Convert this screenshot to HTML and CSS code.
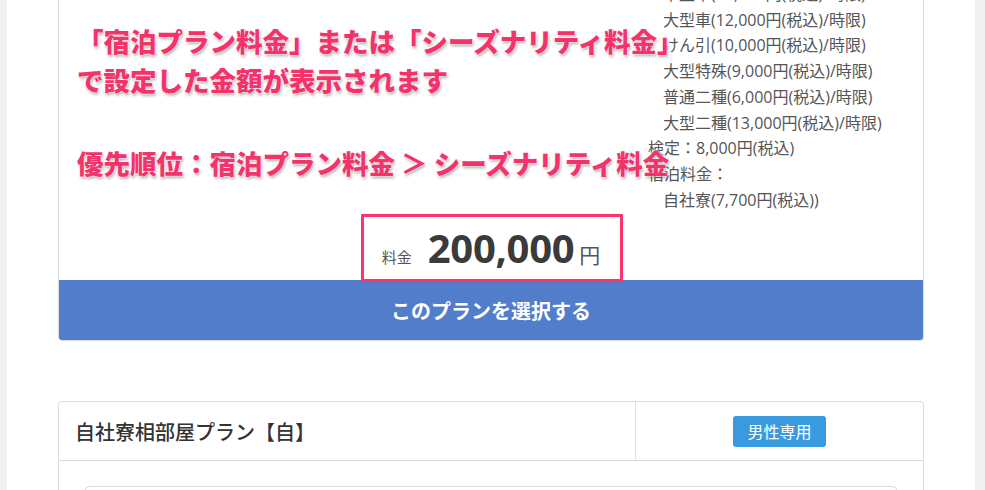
FILE: index.html
```html
<!DOCTYPE html>
<html lang="ja">
<head>
<meta charset="utf-8">
<title>プラン選択</title>
<link rel="stylesheet" href="styles.css">
</head>
<body>
<div class="page">
  <main class="panel">
    <section class="card plan-card">
      <div class="plan-body">
        <div class="plan-main"></div>
        <ul class="fee-list">
          <li class="sub">中型車(10,000円(税込)/時限)</li>
          <li class="sub">大型車(12,000円(税込)/時限)</li>
          <li class="sub">けん引(10,000円(税込)/時限)</li>
          <li class="sub">大型特殊(9,000円(税込)/時限)</li>
          <li class="sub">普通二種(6,000円(税込)/時限)</li>
          <li class="sub">大型二種(13,000円(税込)/時限)</li>
          <li>検定：8,000円(税込)</li>
          <li>宿泊料金：</li>
          <li class="sub">自社寮(7,700円(税込))</li>
        </ul>
      </div>
      <div class="price-row">
        <div class="price-box">
          <span class="price-label">料金</span>
          <span class="price-value">200,000</span>
          <span class="price-unit">円</span>
        </div>
      </div>
      <button class="select-btn" type="button">このプランを選択する</button>
      <div class="annotation">
        <p>「宿泊プラン料金」または「シーズナリティ料金」</p>
        <p>で設定した金額が表示されます</p>
        <p class="gap">優先順位：宿泊プラン料金 ＞ シーズナリティ料金</p>
      </div>
    </section>

    <section class="card plan-card2">
      <div class="plan-head">
        <h2 class="plan-title">自社寮相部屋プラン【自】</h2>
        <div class="plan-tag"><span class="badge">男性専用</span></div>
      </div>
      <div class="plan-body2">
        <div class="inner-box"></div>
      </div>
    </section>
  </main>
</div>
</body>
</html>
```

FILE: styles.css
```css
* { box-sizing: border-box; }

html, body {
  margin: 0;
  height: 100%;
  overflow: hidden;
}

body {
  background: #f1f1f1;
  font-family: "Open Sans", "Noto Sans CJK JP", sans-serif;
  color: #555;
}

.page {
  padding: 0 10px 0 7px;
  height: 100%;
}

.panel {
  display: flow-root;
  background: #fff;
  height: 100%;
  padding: 0 51px;
}

.card {
  border: 1px solid #dcdcdc;
  border-radius: 4px;
  background: #fff;
}

.plan-card {
  position: relative;
  margin-top: -19px;
}

.plan-body {
  display: grid;
  grid-template-columns: 589px 1fr;
}

.fee-list {
  list-style: none;
  margin: 0;
  padding: 0;
  font-size: 16px;
  line-height: 25.7px;
  color: #555;
  white-space: nowrap;
}

.fee-list .sub {
  padding-left: 15px;
}

.price-row {
  display: flex;
  justify-content: center;
  margin-top: 1px;
  margin-bottom: -2px;
  position: relative;
  z-index: 1;
}

.price-box {
  display: flex;
  align-items: baseline;
  border: 3px solid #fb3470;
  border-radius: 1px;
  padding: 7px 20px 7px 18px;
  background: #fff;
  margin-left: 2px;
}

.price-label {
  font-size: 15px;
  color: #555;
  margin-right: 16px;
}

.price-value {
  font-size: 40px;
  font-weight: 700;
  color: #3a3a3a;
  line-height: 48px;
  letter-spacing: -0.3px;
}

.price-unit {
  font-size: 21px;
  color: #555;
  margin-left: 5px;
}

.select-btn {
  display: block;
  width: 100%;
  height: 60px;
  border: 0;
  border-radius: 0 0 3px 3px;
  background: #527dcb;
  color: #fff;
  font-family: "Noto Sans CJK JP", sans-serif;
  font-size: 20px;
  font-weight: 700;
  letter-spacing: 0;
  padding: 0;
}

.annotation {
  position: absolute;
  left: 18px;
  top: 39px;
  font-family: "Noto Sans CJK JP", sans-serif;
  font-weight: 900;
  font-size: 26.5px;
  line-height: 39px;
  color: #f3336c;
  text-shadow: 0 0 2px #fff, 0 0 2px #fff, 1px 2px 3px rgba(0, 0, 0, 0.35);
  white-space: nowrap;
}

.annotation p {
  margin: 0;
}

.annotation .gap {
  margin-top: 44px;
}

.plan-card2 {
  margin-top: 60px;
}

.plan-head {
  display: grid;
  grid-template-columns: 577px 1fr;
  height: 59px;
  border-bottom: 1px solid #dcdcdc;
}

.plan-title {
  margin: 0;
  padding: 0 0 0 16px;
  display: flex;
  align-items: center;
  font-family: "Noto Sans CJK JP", sans-serif;
  font-size: 20px;
  font-weight: 500;
  color: #333;
  border-right: 1px solid #e0e0e0;
}

.plan-tag {
  display: flex;
  align-items: center;
  justify-content: center;
}

.badge {
  display: inline-block;
  background: #3a9ae0;
  color: #fff;
  border-radius: 3px;
  font-family: "Noto Sans CJK JP", sans-serif;
  font-size: 16px;
  line-height: 31px;
  padding: 0 14px;
}

.plan-body2 {
  padding: 25px 26px 0 26px;
}

.inner-box {
  height: 60px;
  border: 1px solid #dcdcdc;
  border-radius: 4px;
}
```
